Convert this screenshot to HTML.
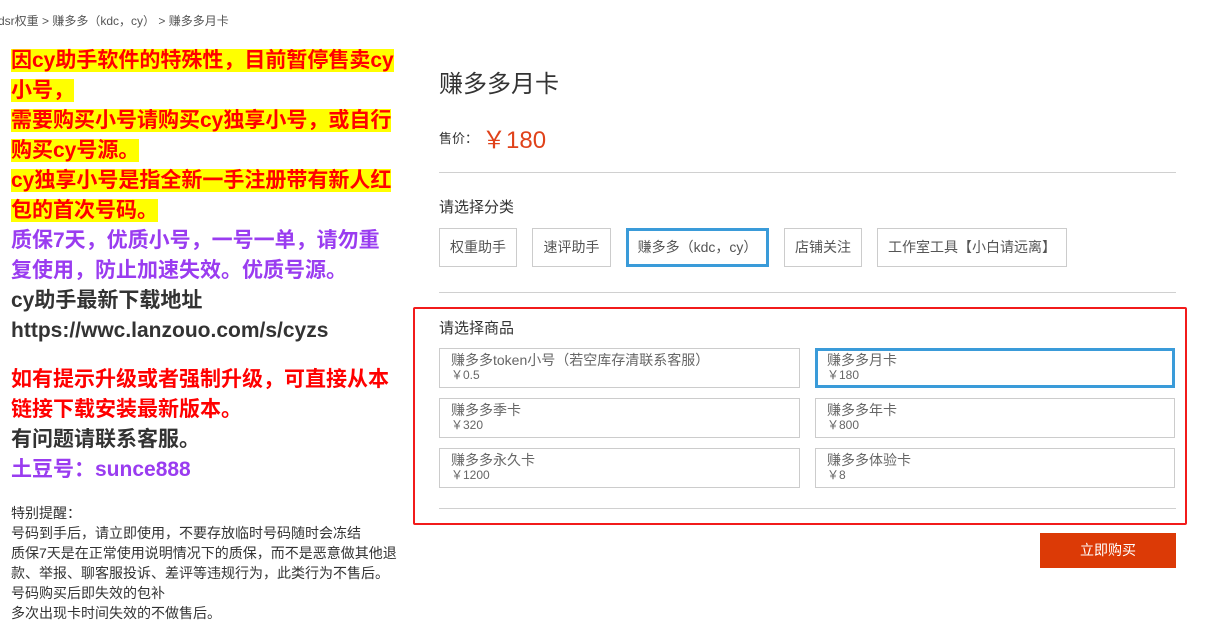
<!DOCTYPE html>
<html><head><meta charset="utf-8"><style>
*{margin:0;padding:0;box-sizing:border-box}
body{width:1205px;height:626px;overflow:hidden;background:#fff;position:relative;font-family:"Liberation Sans","Noto Sans CJK SC",sans-serif;color:#333}
.a{position:absolute;white-space:nowrap}
.bc{left:-2px;top:12px;font-size:12px;color:#555}
.big{left:11px;font-size:21px;font-weight:bold;line-height:30px}
.y{background:#ff0;color:#f00}
.r{color:#f00}.p{color:#9a3cf0}.k{color:#333}
.sm{left:11px;font-size:14px;line-height:20px;color:#333}
.line{position:absolute;height:1px;background:#d0d0d0}
.btn{position:absolute;border:1px solid #ccc;font-size:14px;color:#555;height:39px;line-height:37px;text-align:center}
.sel{border:3px solid #3a9bd9;line-height:33px}
.it{position:absolute;border:1px solid #ccc;height:40px;font-size:14px;color:#666;padding:3px 0 0 11px;line-height:16px}
.it.sel{border:3px solid #3a9bd9;padding:1px 0 0 9px}
.it span{font-size:12px;display:block;line-height:15px}
</style></head><body>
<div class="a bc">dsr权重 &gt; 赚多多（kdc，cy） &gt; 赚多多月卡</div>
<div class="a big" style="top:46px"><span class="y">因cy助手软件的特殊性，目前暂停售卖cy</span><br><span class="y">小号，</span><br><span class="y">需要购买小号请购买cy独享小号，或自行</span><br><span class="y">购买cy号源。</span><br><span class="y">cy独享小号是指全新一手注册带有新人红</span><br><span class="y">包的首次号码。</span><br><span class="p">质保7天，优质小号，一号一单，请勿重</span><br><span class="p">复使用，防止加速失效。优质号源。</span><br><span class="k">cy助手最新下载地址</span><br><span class="k">https://wwc.lanzouo.com/s/cyzs</span></div>
<div class="a big" style="top:365px"><span class="r">如有提示升级或者强制升级，可直接从本</span><br><span class="r">链接下载安装最新版本。</span><br><span class="k">有问题请联系客服。</span><br><span class="p">土豆号：sunce888</span></div>
<div class="a sm" style="top:503px">特别提醒：<br>号码到手后，请立即使用，不要存放临时号码随时会冻结<br>质保7天是在正常使用说明情况下的质保，而不是恶意做其他退<br>款、举报、聊客服投诉、差评等违规行为，此类行为不售后。<br>号码购买后即失效的包补<br>多次出现卡时间失效的不做售后。</div>

<div class="a" style="left:439px;top:64px;font-size:24px;color:#333">赚多多月卡</div>
<div class="a" style="left:439px;top:128px;font-size:13px;color:#333">售价：</div>
<div class="a" style="left:482px;top:120px;font-size:24px;color:#e0421a">￥180</div>
<div class="line" style="left:439px;top:172px;width:737px"></div>
<div class="a" style="left:439px;top:196px;font-size:15px;color:#333">请选择分类</div>
<div class="btn" style="left:439px;top:228px;width:78px">权重助手</div>
<div class="btn" style="left:532px;top:228px;width:79px">速评助手</div>
<div class="btn sel" style="left:626px;top:228px;width:143px">赚多多（kdc，cy）</div>
<div class="btn" style="left:784px;top:228px;width:78px">店铺关注</div>
<div class="btn" style="left:877px;top:228px;width:190px">工作室工具【小白请远离】</div>
<div class="line" style="left:439px;top:292px;width:737px"></div>
<div style="position:absolute;left:413px;top:307px;width:774px;height:218px;border:2px solid #f21b1b;border-radius:2px"></div>
<div class="a" style="left:439px;top:317px;font-size:15px;color:#333">请选择商品</div>
<div class="it" style="left:439px;top:348px;width:361px">赚多多token小号（若空库存清联系客服）<span>￥0.5</span></div>
<div class="it sel" style="left:815px;top:348px;width:360px">赚多多月卡<span>￥180</span></div>
<div class="it" style="left:439px;top:398px;width:361px">赚多多季卡<span>￥320</span></div>
<div class="it" style="left:815px;top:398px;width:360px">赚多多年卡<span>￥800</span></div>
<div class="it" style="left:439px;top:448px;width:361px">赚多多永久卡<span>￥1200</span></div>
<div class="it" style="left:815px;top:448px;width:360px">赚多多体验卡<span>￥8</span></div>
<div class="line" style="left:439px;top:508px;width:737px"></div>
<div style="position:absolute;left:1040px;top:533px;width:136px;height:35px;background:#dc3a06;color:#fff;font-size:14px;text-align:center;line-height:35px">立即购买</div>
</body></html>
